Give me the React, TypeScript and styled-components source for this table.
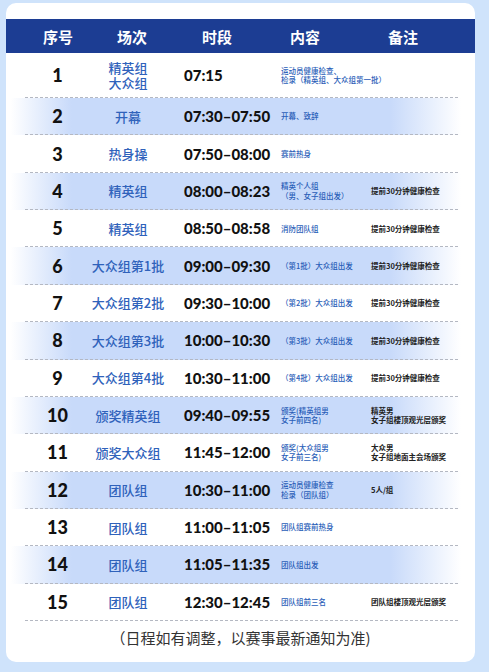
import React from "react";
import styled, { createGlobalStyle } from "styled-components";

const GlobalStyle = createGlobalStyle`
  html, body {
    margin: 0;
    padding: 0;
    background: #cfe3fb;
  }
  body {
    font-family: "Liberation Sans", "Noto Sans CJK SC", sans-serif;
    width: 489px;
    height: 672px;
    overflow: hidden;
  }
`;

interface IScheduleRow {
  no: number;
  session: string;
  time: string;
  content: string;
  remark: string;
}

const CHECK = "提前30分钟健康检查";

// multi-line cells use \n, rendered with white-space: pre-line
const ROWS: IScheduleRow[] = [
  { no: 1, session: "精英组\n大众组", time: "07:15", content: "运动员健康检查、\n检录（精英组、大众组第一批）", remark: "" },
  { no: 2, session: "开幕", time: "07:30–07:50", content: "开幕、致辞", remark: "" },
  { no: 3, session: "热身操", time: "07:50–08:00", content: "赛前热身", remark: "" },
  { no: 4, session: "精英组", time: "08:00–08:23", content: "精英个人组\n（男、女子组出发）", remark: CHECK },
  { no: 5, session: "精英组", time: "08:50–08:58", content: "消防团队组", remark: CHECK },
  { no: 6, session: "大众组第1批", time: "09:00–09:30", content: "（第1批）大众组出发", remark: CHECK },
  { no: 7, session: "大众组第2批", time: "09:30–10:00", content: "（第2批）大众组出发", remark: CHECK },
  { no: 8, session: "大众组第3批", time: "10:00–10:30", content: "（第3批）大众组出发", remark: CHECK },
  { no: 9, session: "大众组第4批", time: "10:30–11:00", content: "（第4批）大众组出发", remark: CHECK },
  { no: 10, session: "颁奖精英组", time: "09:40–09:55", content: "颁奖(精英组男\n女子前四名)", remark: "精英男\n女子组楼顶观光层颁奖" },
  { no: 11, session: "颁奖大众组", time: "11:45–12:00", content: "颁奖(大众组男\n女子前三名)", remark: "大众男\n女子组地面主会场颁奖" },
  { no: 12, session: "团队组", time: "10:30–11:00", content: "运动员健康检查\n检录（团队组）", remark: "5人/组" },
  { no: 13, session: "团队组", time: "11:00–11:05", content: "团队组赛前热身", remark: "" },
  { no: 14, session: "团队组", time: "11:05–11:35", content: "团队组出发", remark: "" },
  { no: 15, session: "团队组", time: "12:30–12:45", content: "团队组前三名", remark: "团队组楼顶观光层颁奖" },
];

const HEADERS = ["序号", "场次", "时段", "内容", "备注"];

export default function App() {
  return (
    <>
      <GlobalStyle />
      <Page>
        <Card>
          <Header>
            {HEADERS.map((h) => (
              <HeaderCell key={h}>{h}</HeaderCell>
            ))}
          </Header>
          {ROWS.map((row) => (
            <Row key={row.no} $striped={row.no % 2 === 0} $tall={row.no === 1}>
              <RowGrid>
                <NoCell>{row.no}</NoCell>
                <SessionCell>{row.session}</SessionCell>
                <TimeCell>{row.time}</TimeCell>
                <ContentCell>{row.content}</ContentCell>
                <RemarkCell>{row.remark}</RemarkCell>
              </RowGrid>
            </Row>
          ))}
          <Footer>（日程如有调整，以赛事最新通知为准)</Footer>
        </Card>
      </Page>
    </>
  );
}

const Page = styled.div`
  padding: 3px 0 0 6px;
`;

const Card = styled.div`
  width: 469px;
  height: 659px;
  box-sizing: border-box;
  background: #ffffff;
  border-radius: 10px;
  padding-top: 16px;
  overflow: hidden;
`;

const Header = styled.div`
  display: grid;
  grid-template-columns: 85px 82px 88px 88px 108px;
  height: 34px;
  background: #1c3d93;
  align-items: center;
`;

const HeaderCell = styled.div`
  color: #ffffff;
  font-family: "Noto Sans CJK SC", sans-serif;
  font-weight: 700;
  font-size: 15px;
  text-align: center;
  &:first-child {
    padding-left: 19px;
  }
`;

const Row = styled.div<{ $striped: boolean; $tall: boolean }>`
  height: ${(p) => (p.$tall ? "45px" : "37.36px")};
  background: ${(p) =>
    p.$striped
      ? "linear-gradient(90deg, rgba(200,218,250,0) 1%, #c8dafa 14%, #c8dafa 82%, rgba(200,218,250,0) 97%)"
      : "transparent"};
`;

const RowGrid = styled.div`
  margin: 0 17px 0 19px;
  height: 100%;
  box-sizing: border-box;
  display: grid;
  grid-template-columns: 65px 76px 115px 90px 1fr;
  align-items: center;
  border-bottom: 1px dashed #b4b8c2;
`;

const NoCell = styled.div`
  text-align: center;
  font-family: "Lato", "Liberation Sans", sans-serif;
  font-weight: 900;
  font-size: 18px;
  color: #111111;
`;

const SessionCell = styled.div`
  text-align: center;
  font-family: "Noto Sans CJK SC", sans-serif;
  font-weight: 500;
  font-size: 13px;
  line-height: 15px;
  color: #2f62bb;
  white-space: pre-line;
`;

const TimeCell = styled.div`
  padding-left: 18px;
  font-family: "Lato", "Liberation Sans", sans-serif;
  font-weight: 900;
  font-size: 15px;
  color: #111111;
  white-space: nowrap;
`;

const ContentCell = styled.div`
  font-family: "Noto Sans CJK SC", sans-serif;
  font-weight: 500;
  font-size: 7.5px;
  line-height: 9.5px;
  color: #2a5eb8;
  white-space: pre;
`;

const RemarkCell = styled.div`
  font-family: "Noto Sans CJK SC", sans-serif;
  font-weight: 700;
  font-size: 7.5px;
  line-height: 9.5px;
  color: #222222;
  white-space: pre;
`;

const Footer = styled.div`
  text-align: center;
  font-family: "Noto Sans CJK SC", sans-serif;
  font-size: 15px;
  color: #333333;
  padding-top: 6px;
`;
